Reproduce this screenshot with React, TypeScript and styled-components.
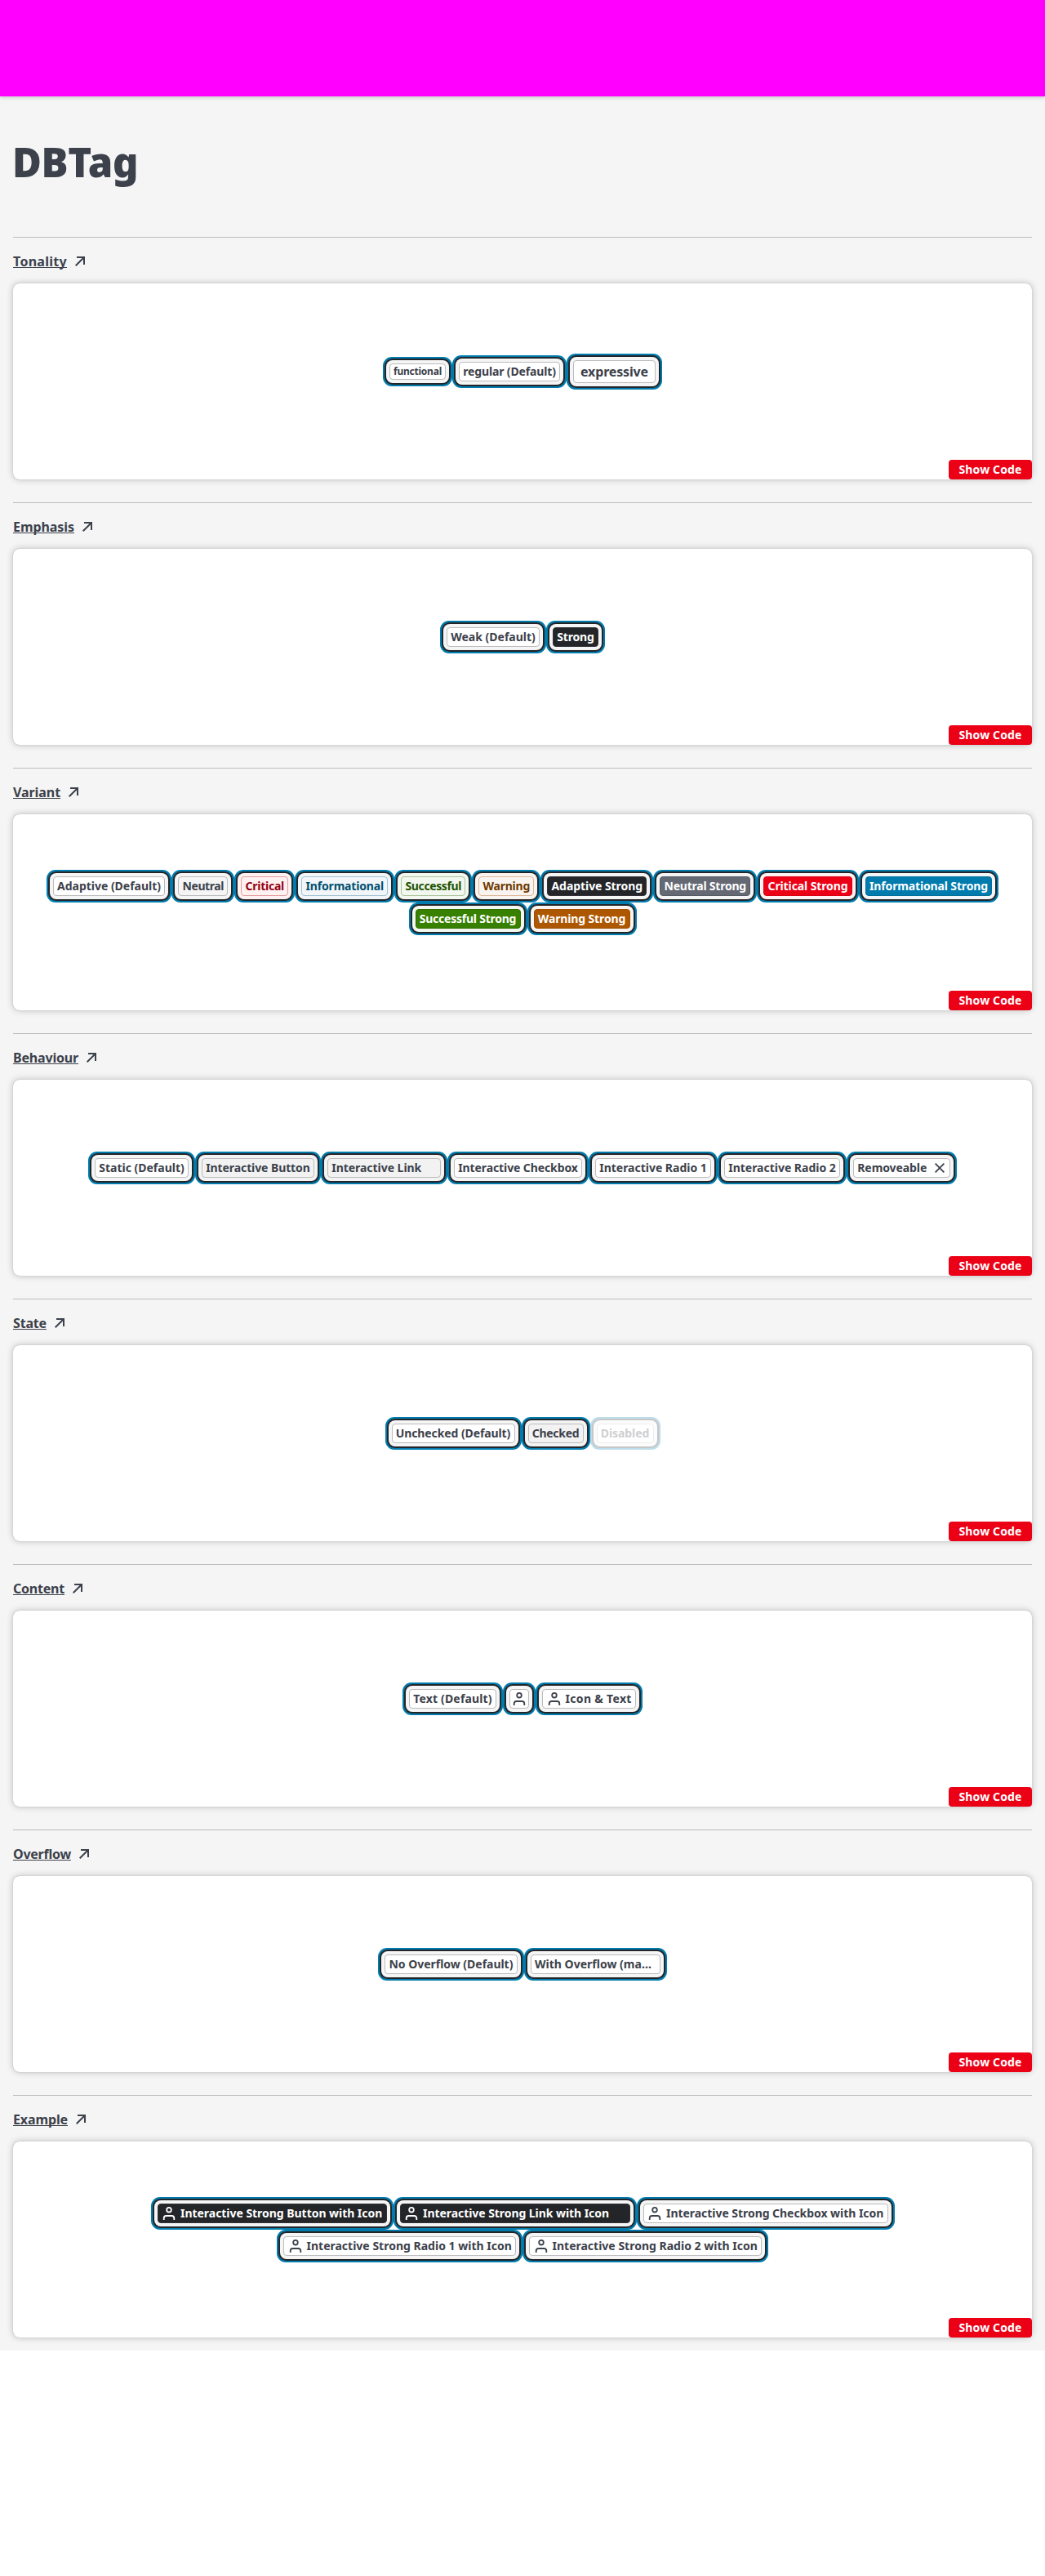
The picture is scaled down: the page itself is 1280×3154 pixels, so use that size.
import React, { useLayoutEffect, useRef, useState } from "react";
import styled, { createGlobalStyle, css } from "styled-components";

const GlobalStyle = createGlobalStyle`
  body {
    margin: 0;
    background: #fff;
    color: #3c414b;
    font-family: "Noto Sans", "Open Sans", sans-serif;
  }
  *, *::before, *::after { box-sizing: border-box; }
`;

type Size = "functional" | "regular" | "expressive";

const sizes = {
  functional: { height: 20, font: 12, pad: 4 },
  regular: { height: 24, font: 14, pad: 4.25 },
  expressive: { height: 28, font: 16, pad: 8 },
};

const tones = {
  adaptive: { bg: "#ffffff", fg: "#3c414b", border: "#bcbcbc", ring: "#f5f5f5" },
  pressed: { bg: "#f2f2f2", fg: "#3c414b", border: "#bcbcbc", ring: "#f3f3f3" },
  neutral: { bg: "#f5f5f5", fg: "#3c414b", border: "#bcbcbd", ring: "#f5f5f5" },
  critical: { bg: "#fdf2f1", fg: "#970014", border: "#e39c9c", ring: "#fdf2f1" },
  informational: { bg: "#f3f6f9", fg: "#00506f", border: "#a0c1d2", ring: "#f3f6f9" },
  successful: { bg: "#f2f7ef", fg: "#225300", border: "#a9c499", ring: "#f2f7ef" },
  warning: { bg: "#faf4f1", fg: "#6d3a00", border: "#dcb898", ring: "#faf4f1" },
  adaptiveStrong: { bg: "#232529", fg: "#ffffff", border: "#303237", ring: "#f5f5f5" },
  neutralStrong: { bg: "#646973", fg: "#ffffff", border: "#575b65", ring: "#f5f5f5" },
  criticalStrong: { bg: "#ec0016", fg: "#ffffff", border: "#d90014", ring: "#fdf2f1" },
  informationalStrong: { bg: "#007bad", fg: "#ffffff", border: "#006f9c", ring: "#f3f6f9" },
  successfulStrong: { bg: "#388000", fg: "#ffffff", border: "#2f6e00", ring: "#f2f7ef" },
  warningStrong: { bg: "#ad5700", fg: "#ffffff", border: "#9e4f00", ring: "#faf4f1" },
};

type Tone = keyof typeof tones;

interface TagData {
  text?: string;
  width: number;
  textWidth?: number;
  tone?: Tone;
  size?: Size;
  icon?: boolean;
  removable?: boolean;
  disabled?: boolean;
}

interface SectionData {
  title: string;
  titleWidth: number;
  tags: TagData[][];
}

const Header = styled.header`
  position: relative;
  height: 118px;
  background: #ff00ff;
  box-shadow: 0 0 6px rgba(0, 0, 0, 0.3);
`;

const Main = styled.main`
  display: flex;
  flex-direction: column;
  padding: 50px 16px 16px;
  background: #f5f5f5;
`;

const PageTitle = styled.h1`
  margin: 0 0 62px -1px;
  font-size: 49px;
  font-weight: 900;
  line-height: 60px;
`;

const Sections = styled.div`
  display: flex;
  flex-direction: column;
  gap: 28px;
`;

const Section = styled.section`
  display: flex;
  flex-direction: column;
  gap: 15px;
  padding-top: 17px;
  border-top: 1px solid #bcbcbc;
`;

const SectionLink = styled.a`
  display: flex;
  align-items: center;
  gap: 10px;
  height: 24px;
  font-size: 16px;
  font-weight: 700;
  line-height: 24px;
`;

const Underlined = styled.span`
  text-decoration: underline;
  text-decoration-thickness: 1px;
  text-underline-offset: 1px;
  text-decoration-skip-ink: none;
`;

const Card = styled.div`
  display: flex;
  flex-direction: column;
  height: 240px;
  border-radius: 8px;
  background: #fff;
  box-shadow: 0 0 1px rgba(0, 0, 0, 0.3), 0 0 8px rgba(0, 0, 0, 0.24);
`;

const Stage = styled.div`
  display: flex;
  flex: 1;
  flex-direction: column;
  justify-content: center;
  gap: 16px;
`;

const TagRow = styled.div`
  display: flex;
  align-items: center;
  justify-content: center;
  gap: 16px;
`;

const CodeButton = styled.button`
  align-self: flex-end;
  width: 102px;
  height: 24px;
  padding: 0 12px 0 12.5px;
  border: 0;
  border-radius: 4px;
  background: #ec0016;
  color: #fff;
  font: 700 14px/24px "Noto Sans", sans-serif;
  text-align: left;
  white-space: nowrap;
`;

const TagBox = styled.span<{ $tone: Tone; $size: Size; $width: number; $disabled?: boolean }>`
  display: flex;
  flex: none;
  align-items: center;
  border-radius: 4px;
  ${({ $tone, $size, $width, $disabled }) => {
    const t = tones[$tone];
    const s = sizes[$size];
    return css`
      width: ${$width}px;
      height: ${s.height}px;
      padding: 0 ${s.pad}px;
      border: 1px solid ${t.border};
      background: ${t.bg};
      color: ${t.fg};
      font-size: ${s.font}px;
      line-height: ${s.height - 2}px;
      box-shadow: 0 0 0 4px ${t.ring}, 0 0 0 6px #232529, 0 0 0 8px #007bad;
      opacity: ${$disabled ? 0.25 : 1};
    `;
  }}
  font-weight: 700;
`;

const Glyph = styled.svg<{ $alone?: boolean }>`
  flex: none;
  margin: ${({ $alone }) => ($alone ? "0 -1.25px" : "0 6px 0 1.25px")};
`;

const CloseGlyph = styled.svg`
  flex: none;
  margin: 0 1.75px 0 auto;
`;

const Text = styled.span`
  white-space: nowrap;
`;

/* Spreads the letters so that the text takes exactly the given width. */
function FitText({ text, width }: { text: string; width: number }) {
  const ref = useRef<HTMLSpanElement>(null);
  const [spacing, setSpacing] = useState(0);
  useLayoutEffect(() => {
    const natural = ref.current!.getBoundingClientRect().width;
    setSpacing((width - natural) / text.length);
  }, [text, width]);
  return (
    <Text ref={ref} style={{ letterSpacing: `${spacing}px` }}>
      {text}
    </Text>
  );
}

function PersonIcon({ alone }: { alone?: boolean }) {
  return (
    <Glyph $alone={alone} width="16" height="24" viewBox="4 0 16 24" fill="none" stroke="currentColor" strokeWidth="1.8">
      <circle cx="12" cy="7.7" r="2.8" />
      <path d="M5.7 20v-2a3 3 0 0 1 3-3h6.6a3 3 0 0 1 3 3v2" />
    </Glyph>
  );
}

function ArrowIcon() {
  return (
    <svg width="12" height="12" viewBox="0 0 12 12" fill="none" stroke="currentColor" strokeWidth="2">
      <path d="M2 1h9v9M11 1 .7 11.3" />
    </svg>
  );
}

function Tag({ text, width, textWidth, tone = "adaptive", size = "regular", icon, removable, disabled }: TagData) {
  const inner = width - 2 - 2 * sizes[size].pad - (icon ? 23.25 : 0);
  return (
    <TagBox $tone={tone} $size={size} $width={width} $disabled={disabled}>
      {icon && <PersonIcon alone={!text} />}
      {text && <FitText text={text} width={textWidth ?? inner} />}
      {removable && (
        <CloseGlyph width="12" height="12" viewBox="0 0 12 12" fill="none" stroke="currentColor" strokeWidth="1.8">
          <path d="m.6.6 10.8 10.8M11.4.6.6 11.4" />
        </CloseGlyph>
      )}
    </TagBox>
  );
}

const sections: SectionData[] = [
  {
    title: "Tonality",
    titleWidth: 66,
    tags: [[
      { text: "functional", width: 69, size: "functional" },
      { text: "regular (Default)", width: 124 },
      { text: "expressive", width: 101, size: "expressive" },
    ]],
  },
  {
    title: "Emphasis",
    titleWidth: 75,
    tags: [[
      { text: "Weak (Default)", width: 114 },
      { text: "Strong", width: 56, tone: "adaptiveStrong" },
    ]],
  },
  {
    title: "Variant",
    titleWidth: 58,
    tags: [
      [
        { text: "Adaptive (Default)", width: 137.5 },
        { text: "Neutral", width: 61, tone: "neutral" },
        { text: "Critical", width: 58, tone: "critical" },
        { text: "Informational", width: 106, tone: "informational" },
        { text: "Successful", width: 79, tone: "successful" },
        { text: "Warning", width: 68, tone: "warning" },
        { text: "Adaptive Strong", width: 122, tone: "adaptiveStrong" },
        { text: "Neutral Strong", width: 111, tone: "neutralStrong" },
        { text: "Critical Strong", width: 108.5, tone: "criticalStrong" },
        { text: "Informational Strong", width: 155.5, tone: "informationalStrong" },
      ],
      [
        { text: "Successful Strong", width: 129, tone: "successfulStrong" },
        { text: "Warning Strong", width: 118, tone: "warningStrong" },
      ],
    ],
  },
  {
    title: "Behaviour",
    titleWidth: 80,
    tags: [[
      { text: "Static (Default)", width: 115 },
      { text: "Interactive Button", width: 138, tone: "pressed" },
      { text: "Interactive Link", width: 139, textWidth: 110, tone: "pressed" },
      { text: "Interactive Checkbox", width: 157 },
      { text: "Interactive Radio 1", width: 142 },
      { text: "Interactive Radio 2", width: 142 },
      { text: "Removeable", width: 119, textWidth: 85, removable: true },
    ]],
  },
  {
    title: "State",
    titleWidth: 41,
    tags: [[
      { text: "Unchecked (Default)", width: 151 },
      { text: "Checked", width: 68, tone: "pressed" },
      { text: "Disabled", width: 70, disabled: true },
    ]],
  },
  {
    title: "Content",
    titleWidth: 63,
    tags: [[
      { text: "Text (Default)", width: 107 },
      { width: 24, icon: true },
      { text: "Icon & Text", width: 115, icon: true },
    ]],
  },
  {
    title: "Overflow",
    titleWidth: 71,
    tags: [[
      { text: "No Overflow (Default)", width: 162.5 },
      { text: "With Overflow (ma…", width: 159, textWidth: 143 },
    ]],
  },
  {
    title: "Example",
    titleWidth: 67,
    tags: [
      [
        { text: "Interactive Strong Button with Icon", width: 281, icon: true, tone: "adaptiveStrong" },
        { text: "Interactive Strong Link with Icon", width: 282, textWidth: 228, icon: true, tone: "adaptiveStrong" },
        { text: "Interactive Strong Checkbox with Icon", width: 300, icon: true },
      ],
      [
        { text: "Interactive Strong Radio 1 with Icon", width: 285, icon: true },
        { text: "Interactive Strong Radio 2 with Icon", width: 285, icon: true },
      ],
    ],
  },
];

export default function App() {
  return (
    <>
      <GlobalStyle />
      <Header />
      <Main>
        <PageTitle>
          <FitText text="DBTag" width={154} />
        </PageTitle>
        <Sections>
          {sections.map((section) => (
            <Section key={section.title}>
              <SectionLink>
                <Underlined>
                  <FitText text={section.title} width={section.titleWidth} />
                </Underlined>
                <ArrowIcon />
              </SectionLink>
              <Card>
                <Stage>
                  {section.tags.map((row, i) => (
                    <TagRow key={i}>
                      {row.map((tag, j) => (
                        <Tag key={j} {...tag} />
                      ))}
                    </TagRow>
                  ))}
                </Stage>
                <CodeButton>
                  <FitText text="Show Code" width={77} />
                </CodeButton>
              </Card>
            </Section>
          ))}
        </Sections>
      </Main>
    </>
  );
}
